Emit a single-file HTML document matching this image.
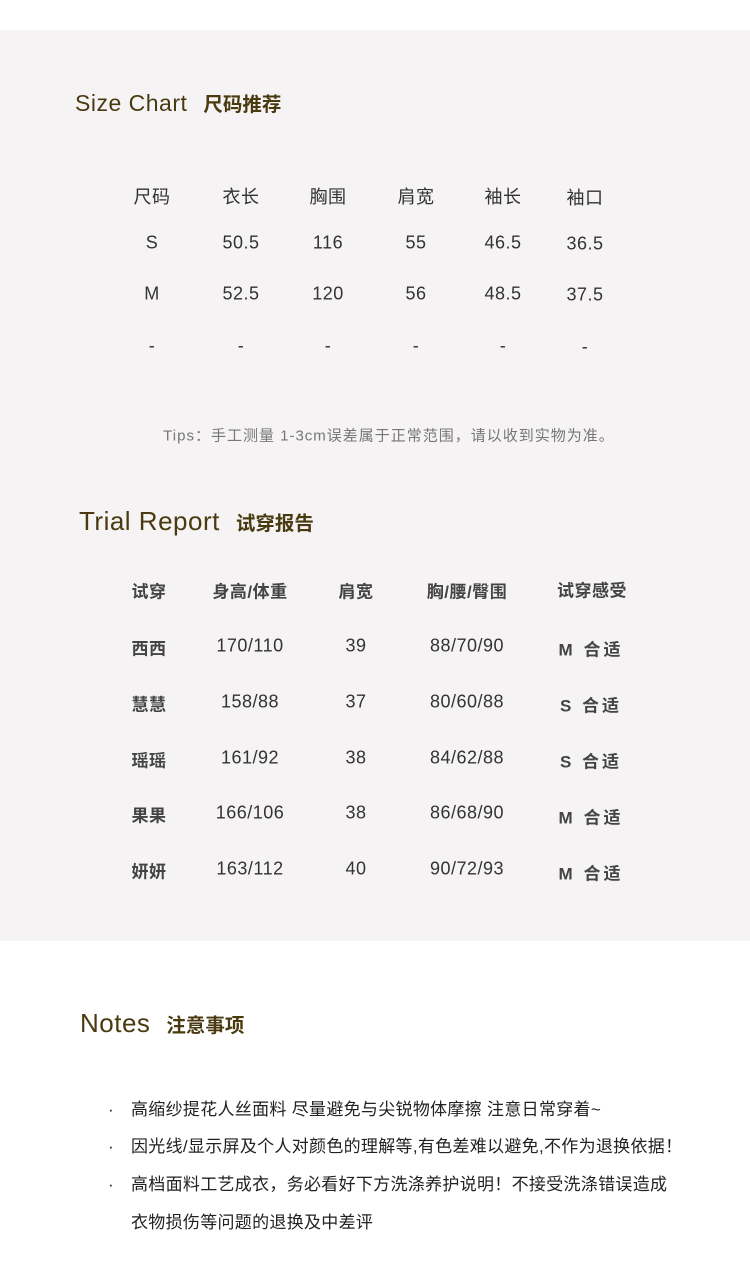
<!DOCTYPE html>
<html><head><meta charset="utf-8"><style>
body{margin:0;width:750px;height:1269px;background:#fff;position:relative;overflow:hidden;font-family:"Liberation Sans","Noto Sans CJK SC",sans-serif;color:#333}
.bg{position:absolute;left:0;top:30px;width:750px;height:911px;background:#f5f3f4}
.t{position:absolute;white-space:nowrap;transform:translate(-50%,-50%);font-size:18px;color:#333;letter-spacing:0.5px}
.h{position:absolute;white-space:nowrap;color:#4a3a10}
.h .en{font-size:23px;letter-spacing:0.5px}
.h .cn{font-size:19.5px;font-weight:bold;margin-left:16px}
.b{font-weight:bold;color:#444;font-size:17px}
.m{letter-spacing:3px}
.n{position:absolute;left:108px;font-size:17px;letter-spacing:0.3px;color:#222;white-space:nowrap}
.n span{display:inline-block;width:23px}
</style></head><body>
<div class="bg"></div>
<div class="h" style="left:75px;top:88px"><span class="en">Size Chart</span><span class="cn">尺码推荐</span></div>
<div class="h" style="left:79px;top:506px"><span class="en" style="font-size:26px">Trial Report</span><span class="cn">试穿报告</span></div>
<div class="h" style="left:80px;top:1008px"><span class="en" style="font-size:26px">Notes</span><span class="cn">注意事项</span></div>

<div class="t" style="left:152px;top:196px">尺码</div><div class="t" style="left:241px;top:196px">衣长</div><div class="t" style="left:328px;top:196px">胸围</div><div class="t" style="left:416px;top:196px">肩宽</div><div class="t" style="left:503px;top:196px">袖长</div><div class="t" style="left:585px;top:197px">袖口</div>
<div class="t" style="left:152px;top:243px">S</div><div class="t" style="left:241px;top:243px">50.5</div><div class="t" style="left:328px;top:243px">116</div><div class="t" style="left:416px;top:243px">55</div><div class="t" style="left:503px;top:243px">46.5</div><div class="t" style="left:585px;top:244px">36.5</div>
<div class="t" style="left:152px;top:294px">M</div><div class="t" style="left:241px;top:294px">52.5</div><div class="t" style="left:328px;top:294px">120</div><div class="t" style="left:416px;top:294px">56</div><div class="t" style="left:503px;top:294px">48.5</div><div class="t" style="left:585px;top:295px">37.5</div>
<div class="t" style="left:152px;top:346px">-</div><div class="t" style="left:241px;top:346px">-</div><div class="t" style="left:328px;top:346px">-</div><div class="t" style="left:416px;top:346px">-</div><div class="t" style="left:503px;top:346px">-</div><div class="t" style="left:585px;top:347px">-</div>
<div class="t" style="left:389px;top:435px;font-size:15px;color:#777;letter-spacing:1px">Tips：手工测量 1-3cm误差属于正常范围，请以收到实物为准。</div>

<div class="t b" style="left:149px;top:590px">试穿</div><div class="t b" style="left:250px;top:590px">身高/体重</div><div class="t b" style="left:356px;top:590px">肩宽</div><div class="t b" style="left:467px;top:590px">胸/腰/臀围</div><div class="t b" style="left:592px;top:589px">试穿感受</div>

<div class="t b" style="left:149px;top:647px">西西</div><div class="t" style="left:250px;top:646px">170/110</div><div class="t" style="left:356px;top:646px">39</div><div class="t" style="left:467px;top:646px">88/70/90</div><div class="t b m" style="left:591px;top:648px">M 合适</div>
<div class="t b" style="left:149px;top:703px">慧慧</div><div class="t" style="left:250px;top:702px">158/88</div><div class="t" style="left:356px;top:702px">37</div><div class="t" style="left:467px;top:702px">80/60/88</div><div class="t b m" style="left:591px;top:704px">S 合适</div>
<div class="t b" style="left:149px;top:759px">瑶瑶</div><div class="t" style="left:250px;top:758px">161/92</div><div class="t" style="left:356px;top:758px">38</div><div class="t" style="left:467px;top:758px">84/62/88</div><div class="t b m" style="left:591px;top:760px">S 合适</div>
<div class="t b" style="left:149px;top:814px">果果</div><div class="t" style="left:250px;top:813px">166/106</div><div class="t" style="left:356px;top:813px">38</div><div class="t" style="left:467px;top:813px">86/68/90</div><div class="t b m" style="left:591px;top:816px">M 合适</div>
<div class="t b" style="left:149px;top:870px">妍妍</div><div class="t" style="left:250px;top:869px">163/112</div><div class="t" style="left:356px;top:869px">40</div><div class="t" style="left:467px;top:869px">90/72/93</div><div class="t b m" style="left:591px;top:872px">M 合适</div>

<div class="n" style="top:1095px"><span>·</span>高缩纱提花人丝面料 尽量避免与尖锐物体摩擦 注意日常穿着~</div>
<div class="n" style="top:1132px"><span>·</span>因光线/显示屏及个人对颜色的理解等,有色差难以避免,不作为退换依据！</div>
<div class="n" style="top:1170px"><span>·</span>高档面料工艺成衣，务必看好下方洗涤养护说明！不接受洗涤错误造成</div>
<div class="n" style="top:1208px"><span></span>衣物损伤等问题的退换及中差评</div>
</body></html>
